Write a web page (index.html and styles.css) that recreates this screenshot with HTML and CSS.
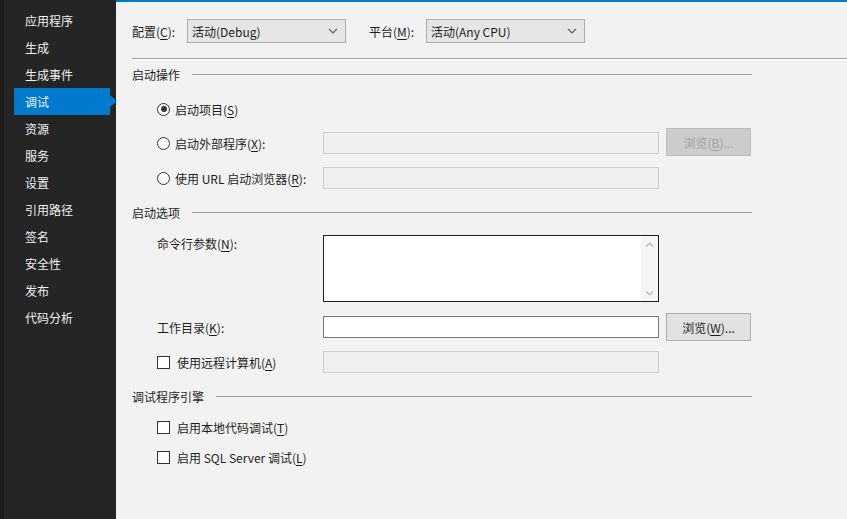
FILE: index.html
```html
<!DOCTYPE html>
<html lang="zh-CN">
<head>
    <meta charset="UTF-8">
    <title>项目属性 - 调试</title>
    <link rel="stylesheet" href="styles.css">
</head>
<body>
    <div class="sidebar">
        <div class="nav-item">应用程序</div>
        <div class="nav-item">生成</div>
        <div class="nav-item">生成事件</div>
        <div class="nav-item active">调试</div>
        <div class="nav-item">资源</div>
        <div class="nav-item">服务</div>
        <div class="nav-item">设置</div>
        <div class="nav-item">引用路径</div>
        <div class="nav-item">签名</div>
        <div class="nav-item">安全性</div>
        <div class="nav-item">发布</div>
        <div class="nav-item">代码分析</div>
    </div>

    <div class="main">
        <!-- Configuration / platform -->
        <div class="config-row">
            <span class="config-label">配置(<u>C</u>):</span>
            <div class="combo">
                <span>活动(Debug)</span>
                <svg class="chevron" width="10" height="6" viewBox="0 0 10 6"><path d="M1 1 L5 5 L9 1" fill="none" stroke="#606060" stroke-width="1.2"/></svg>
            </div>
            <span class="config-label platform">平台(<u>M</u>):</span>
            <div class="combo">
                <span>活动(Any CPU)</span>
                <svg class="chevron" width="10" height="6" viewBox="0 0 10 6"><path d="M1 1 L5 5 L9 1" fill="none" stroke="#606060" stroke-width="1.2"/></svg>
            </div>
        </div>
        <div class="divider"></div>

        <!-- Start action -->
        <div class="section-head"><span>启动操作</span><div class="rule"></div></div>
        <div class="row first-radio">
            <span class="radio checked"></span>
            <span>启动项目(<u>S</u>)</span>
        </div>
        <div class="row r-ext">
            <div class="label-col"><span class="radio"></span><span>启动外部程序(<u>X</u>):</span></div>
            <div class="textbox disabled"></div>
            <div class="button disabled">浏览(<u>B</u>)...</div>
        </div>
        <div class="row r-url">
            <div class="label-col"><span class="radio"></span><span>使用 URL 启动浏览器(<u>R</u>):</span></div>
            <div class="textbox disabled"></div>
        </div>

        <!-- Start options -->
        <div class="section-head s-opts"><span>启动选项</span><div class="rule"></div></div>
        <div class="row r-args">
            <div class="label-col top">命令行参数(<u>N</u>):</div>
            <div class="textarea">
                <div class="scrollbar">
                    <svg width="9" height="5" viewBox="0 0 9 5"><path d="M1 4.5 L4.5 1 L8 4.5" fill="none" stroke="#b5b5b5" stroke-width="1.2"/></svg>
                    <svg width="9" height="5" viewBox="0 0 9 5"><path d="M1 0.5 L4.5 4 L8 0.5" fill="none" stroke="#b5b5b5" stroke-width="1.2"/></svg>
                </div>
            </div>
        </div>
        <div class="row r-dir">
            <div class="label-col">工作目录(<u>K</u>):</div>
            <div class="textbox"></div>
            <div class="button">浏览(<u>W</u>)...</div>
        </div>
        <div class="row r-remote">
            <div class="label-col"><span class="check"></span><span>使用远程计算机(<u>A</u>)</span></div>
            <div class="textbox disabled"></div>
        </div>

        <!-- Debugger engines -->
        <div class="section-head s-eng"><span>调试程序引擎</span><div class="rule"></div></div>
        <div class="row r-native">
            <span class="check"></span><span>启用本地代码调试(<u>T</u>)</span>
        </div>
        <div class="row r-sql">
            <span class="check"></span><span>启用 SQL Server 调试(<u>L</u>)</span>
        </div>
    </div>
</body>
</html>
```

FILE: styles.css
```css
body {
    margin: 0;
    display: flex;
    height: 519px;
    overflow: hidden;
    font-family: "Noto Sans CJK SC", "Noto Sans", sans-serif;
    font-size: 12px;
    color: #1e1e1e;
    background-color: #f2f2f2;
}

u {
    text-decoration: underline;
    text-underline-offset: 2px;
}

/* Left navigation */
.sidebar {
    width: 112px;
    flex-shrink: 0;
    background-color: #252526;
    border-left: 4px solid #1b1b1c;
    padding-top: 7px;
    box-sizing: content-box;
}

.nav-item {
    height: 27px;
    line-height: 27px;
    margin-left: 10px;
    padding-left: 11px;
    color: #f1f1f1;
    position: relative;
}

.nav-item.active {
    background-color: #007acc;
    width: 85px;
}

.nav-item.active::after {
    content: "";
    position: absolute;
    right: -7px;
    top: 7px;
    border-top: 6px solid transparent;
    border-bottom: 6px solid transparent;
    border-left: 7px solid #007acc;
}

/* Main panel */
.main {
    flex: 1;
    border-top: 2px solid #007acc;
    padding: 17px 0 0 16px;
}

.config-row {
    display: flex;
    align-items: center;
    height: 24px;
}

.config-label {
    width: 55px;
}

.config-label.platform {
    margin-left: 23px;
    width: 57px;
}

.combo {
    width: 159px;
    height: 24px;
    box-sizing: border-box;
    border: 1px solid #acacac;
    background-color: #e5e5e5;
    display: flex;
    align-items: center;
    justify-content: space-between;
    padding: 0 7px 0 4px;
}

.divider {
    margin-top: 15px;
    border-top: 1px solid #a0a0a0;
    border-bottom: 1px solid #ffffff;
}

.section-head {
    display: flex;
    align-items: center;
    height: 20px;
    margin-top: 4px;
    width: 620px;
}

.section-head .rule {
    flex: 1;
    margin-left: 12px;
    border-top: 1px solid #a0a0a0;
}

.s-opts { margin-top: 13px; }
.s-eng { margin-top: 13px; }

.row {
    display: flex;
    align-items: center;
    padding-left: 25px;
    height: 22px;
}

.first-radio { margin-top: 14px; }
.r-ext { margin-top: 12px; }
.r-url { margin-top: 13px; }
.r-args { margin-top: 13px; height: 67px; align-items: flex-start; }
.r-dir { margin-top: 11px; height: 28px; }
.r-remote { margin-top: 10px; }
.r-native { margin-top: 10px; }
.r-sql { margin-top: 8px; }

.label-col {
    width: 166px;
    display: flex;
    align-items: center;
}

.label-col.top {
    padding-top: 1px;
    line-height: 16px;
}

.radio {
    width: 11px;
    height: 11px;
    border: 1px solid #333333;
    border-radius: 50%;
    background-color: #ffffff;
    margin-right: 5px;
    position: relative;
    flex-shrink: 0;
}

.radio.checked::after {
    content: "";
    position: absolute;
    left: 2.5px;
    top: 2.5px;
    width: 6px;
    height: 6px;
    border-radius: 50%;
    background-color: #333333;
}

.check {
    width: 11px;
    height: 11px;
    border: 1px solid #333333;
    background-color: #ffffff;
    margin-right: 7px;
    flex-shrink: 0;
}

.textbox {
    width: 336px;
    height: 22px;
    box-sizing: border-box;
    border: 1px solid #7a7a7a;
    background-color: #ffffff;
}

.textbox.disabled {
    border-color: #cccccc;
    background-color: #f0f0f0;
}

.textarea {
    width: 336px;
    height: 67px;
    box-sizing: border-box;
    border: 1px solid #1e1e1e;
    background-color: #ffffff;
    display: flex;
    justify-content: flex-end;
}

.scrollbar {
    width: 17px;
    background-color: #f5f5f5;
    display: flex;
    flex-direction: column;
    justify-content: space-between;
    align-items: center;
    padding: 6px 0 5px;
}

.button {
    width: 85px;
    height: 28px;
    margin-left: 7px;
    box-sizing: border-box;
    border: 1px solid #adadad;
    background-color: #e1e1e1;
    display: flex;
    align-items: center;
    justify-content: center;
}

.button.disabled {
    border-color: #bfbfbf;
    background-color: #cccccc;
    color: #a0a0a0;
}

.r-ext .button {
    margin-top: -2px;
}
```
